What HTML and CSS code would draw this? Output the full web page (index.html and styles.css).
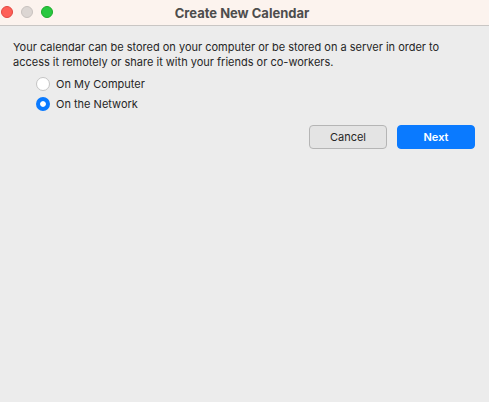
FILE: index.html
```html
<!DOCTYPE html>
<html lang="en">
<head>
  <meta charset="UTF-8">
  <title>Create New Calendar</title>
  <link rel="stylesheet" href="styles.css">
</head>
<body>
  <div class="window">
    <div class="titlebar">
      <div class="lights">
        <span class="light red"></span>
        <span class="light gray"></span>
        <span class="light green"></span>
      </div>
      <div class="title">Create New Calendar</div>
    </div>

    <div class="content">
      <p class="intro">Your calendar can be stored on your computer or be stored on a server in order to access it remotely or share it with your friends or co-workers.</p>

      <div class="choices">
        <label class="choice">
          <input type="radio" name="location" value="local">
          <span class="dot"></span>
          On My Computer
        </label>
        <label class="choice">
          <input type="radio" name="location" value="network" checked>
          <span class="dot"></span>
          On the Network
        </label>
      </div>

      <div class="buttons">
        <button class="btn">Cancel</button>
        <button class="btn primary">Next</button>
      </div>
    </div>
  </div>
</body>
</html>
```

FILE: styles.css
```css
html, body {
  margin: 0;
  padding: 0;
  height: 100%;
}
body {
  background-color: #ececec;
  font-family: Inter, "Liberation Sans", Arial, sans-serif;
  color: #262626;
}
.window {
  height: 100%;
}
.titlebar {
  position: relative;
  height: 25px;
  background-color: #fcf3ee;
  border-bottom: 1px solid #c9c6c4;
  display: flex;
  align-items: center;
  justify-content: center;
}
.lights {
  position: absolute;
  left: 1px;
  top: 6px;
  display: flex;
  gap: 8px;
}
.light {
  width: 12px;
  height: 12px;
  border-radius: 50%;
  box-sizing: border-box;
}
.light.red {
  background-color: #fe5f57;
  border: 1px solid #e2463f;
}
.light.gray {
  background-color: #dcd6d3;
  border: 1px solid #c8c2bf;
}
.light.green {
  background-color: #28c840;
  border: 1px solid #1aab29;
}
.title {
  font-size: 13px;
  font-weight: 700;
  color: #4d4d4d;
  margin: 1px 5px 0 0;
}
.content {
  padding: 14px 14px 0 13px;
}
.intro {
  margin: 0;
  font-size: 11px;
  line-height: 15px;
  max-width: 436px;
}
.choices {
  display: flex;
  flex-direction: column;
  gap: 6px;
  margin: 7px 0 0 23px;
}
.choice {
  display: flex;
  align-items: center;
  gap: 6px;
  font-size: 11px;
  height: 14px;
}
.choice input {
  display: none;
}
.dot {
  width: 14px;
  height: 14px;
  border-radius: 50%;
  box-sizing: border-box;
  background-color: #ffffff;
  border: 1px solid #c4c4c4;
}
.choice input:checked + .dot {
  background-color: #0a7aff;
  border: 4.5px solid #0a7aff;
  box-shadow: inset 0 0 0 3px #ffffff;
}
.buttons {
  display: flex;
  justify-content: flex-end;
  gap: 10px;
  margin-top: 14px;
}
.btn {
  width: 78px;
  height: 24px;
  font-family: inherit;
  font-size: 11px;
  color: #262626;
  background-color: #e4e4e4;
  border: 1px solid #b5b5b5;
  border-radius: 4px;
}
.btn.primary {
  background-color: #0a7aff;
  border-color: #0a7aff;
  color: #ffffff;
  font-weight: 600;
}
```
